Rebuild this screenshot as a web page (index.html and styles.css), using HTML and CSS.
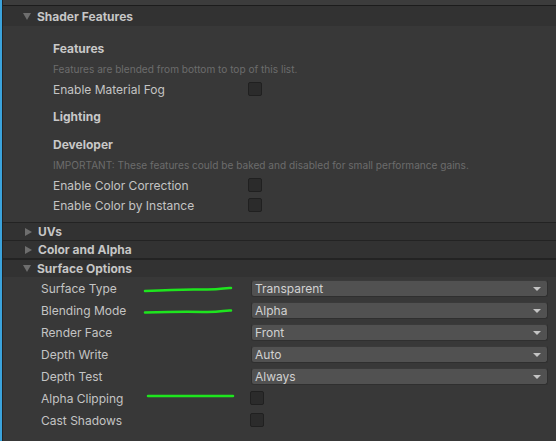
FILE: index.html
```html
<!DOCTYPE html>
<html lang="en">
<head>
    <meta charset="UTF-8">
    <title>Material Inspector</title>
    <link rel="stylesheet" href="styles.css">
</head>
<body>
    <div class="accent"></div>
    <div class="inspector">
        <div class="topbar"></div>

        <div class="foldout first open">
            <span class="arrow down"></span>Shader Features
        </div>
        <div class="group">
            <div class="title">Features</div>
            <div class="help">Features are blended from bottom to top of this list.</div>
            <div class="row">
                <span class="label">Enable Material Fog</span>
                <span class="check"></span>
            </div>

            <div class="title spaced">Lighting</div>

            <div class="title spaced">Developer</div>
            <div class="help">IMPORTANT: These features could be baked and disabled for small performance gains.</div>
            <div class="row">
                <span class="label">Enable Color Correction</span>
                <span class="check"></span>
            </div>
            <div class="row">
                <span class="label">Enable Color by Instance</span>
                <span class="check"></span>
            </div>
        </div>

        <div class="foldout">
            <span class="arrow right"></span>UVs
        </div>
        <div class="foldout thick">
            <span class="arrow right"></span>Color and Alpha
        </div>
        <div class="foldout open">
            <span class="arrow down"></span>Surface Options
        </div>
        <div class="props">
            <div class="prop">
                <span class="label">Surface Type</span>
                <svg class="mark" width="90" height="8" viewBox="0 0 90 8"><path d="M2 5 C 20 4, 40 3, 60 3.5 S 80 1.5, 88 2"/></svg>
                <div class="select">Transparent<span class="caret"></span></div>
            </div>
            <div class="prop">
                <span class="label">Blending Mode</span>
                <svg class="mark" width="90" height="8" viewBox="0 0 90 8"><path d="M2 4.5 C 20 4, 40 3.5, 60 4 S 80 2, 88 2.5"/></svg>
                <div class="select">Alpha<span class="caret"></span></div>
            </div>
            <div class="prop">
                <span class="label">Render Face</span>
                <div class="select">Front<span class="caret"></span></div>
            </div>
            <div class="prop">
                <span class="label">Depth Write</span>
                <div class="select">Auto<span class="caret"></span></div>
            </div>
            <div class="prop">
                <span class="label">Depth Test</span>
                <div class="select">Always<span class="caret"></span></div>
            </div>
            <div class="prop">
                <span class="label">Alpha Clipping</span>
                <svg class="mark flat" width="90" height="8" viewBox="0 0 90 8"><path d="M2 4 L 87 4"/></svg>
                <span class="check"></span>
            </div>
            <div class="prop">
                <span class="label">Cast Shadows</span>
                <span class="check"></span>
            </div>
        </div>
    </div>
</body>
</html>
```

FILE: styles.css
```css
body {
    margin: 0;
    height: 441px;
    overflow: hidden;
    display: flex;
    background-color: #383838;
    font-family: 'Inter', 'Liberation Sans', sans-serif;
    font-size: 12px;
    color: #c4c4c4;
}

.accent {
    width: 2px;
    background: #3ba3dc;
    border-right: 1px solid #232323;
}

.inspector {
    flex: 1;
    display: flex;
    flex-direction: column;
}

.topbar {
    height: 5px;
    background: #3c3c3c;
    border-bottom: 1px solid #1c1c1c;
}

.foldout {
    height: 17px;
    display: flex;
    align-items: center;
    background: #323232;
    font-weight: bold;
    color: #c6c6c6;
    border-top: 1px solid #232323;
}

.foldout.first {
    height: 19px;
    padding-top: 1px;
    border-top: none;
}

.foldout.thick {
    border-bottom: 1px solid #232323;
}

.arrow.down {
    width: 0;
    height: 0;
    border-left: 4px solid transparent;
    border-right: 4px solid transparent;
    border-top: 7px solid #6e6e6e;
    margin-left: 20px;
    margin-right: 6px;
}

.arrow.right {
    width: 0;
    height: 0;
    border-top: 4px solid transparent;
    border-bottom: 4px solid transparent;
    border-left: 7px solid #6e6e6e;
    margin-left: 22px;
    margin-right: 6px;
}

.group {
    padding: 13px 0 7px 50px;
}

.title {
    height: 20px;
    line-height: 20px;
    font-weight: bold;
    color: #c8c8c8;
}

.title.spaced {
    margin-top: 8px;
}

.help {
    height: 20px;
    line-height: 20px;
    font-size: 10.1px;
    color: #6c6c6c;
    white-space: nowrap;
}

.row {
    height: 20px;
    display: flex;
    align-items: center;
}

.row .label {
    width: 195px;
}

.check {
    width: 12px;
    height: 12px;
    background: #2b2b2b;
    border: 1px solid #202020;
    border-radius: 2px;
}

.props {
    padding: 0 8px 0 38px;
}

.prop {
    position: relative;
    height: 22px;
    display: flex;
    align-items: center;
}

.prop .label {
    width: 210px;
    flex-shrink: 0;
}

.prop .check {
    margin-left: -1px;
}

.select {
    flex: 1;
    position: relative;
    height: 15px;
    line-height: 15px;
    padding-left: 3px;
    background: #515151;
    border: 1px solid #2f2f2f;
    border-top-color: #3a3a3a;
    border-radius: 3px;
    color: #d2d2d2;
}

.caret {
    position: absolute;
    right: 6px;
    top: 6px;
    border-left: 4px solid transparent;
    border-right: 4px solid transparent;
    border-top: 4px solid #c4c4c4;
}

.mark {
    position: absolute;
    left: 102px;
    top: 9px;
}

.mark.flat {
    left: 105px;
    top: 5px;
}

.mark path {
    fill: none;
    stroke: #1ee51e;
    stroke-width: 2.5;
    stroke-linecap: round;
}
```
